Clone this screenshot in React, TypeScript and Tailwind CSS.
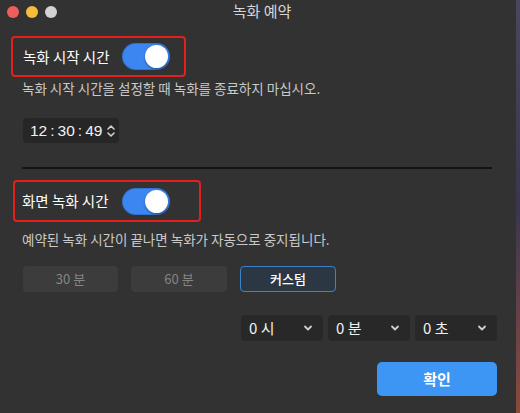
import React from 'react';

const FONT = '"Noto Sans CJK KR", "Noto Sans", sans-serif';

const Toggle: React.FC = () => (
  <div className="w-[48px] h-[27px] rounded-full bg-[#3b86f0] flex items-center justify-end pr-[2px] shadow-[inset_0_0_0_1px_rgba(0,0,0,0.15)]">
    <div className="w-[23px] h-[23px] rounded-full bg-white shadow-[0_1px_2px_rgba(0,0,0,0.4)]" />
  </div>
);

const Chevron: React.FC = () => (
  <svg width="10" height="10" viewBox="0 0 10 10" fill="none" stroke="#cfcfcf" strokeWidth="1.8" strokeLinecap="round" strokeLinejoin="round">
    <path d="M2 3.5 L5 6.5 L8 3.5" />
  </svg>
);

const Select: React.FC<{ label: string }> = ({ label }) => (
  <div className="w-[82px] h-[26px] rounded-[4px] bg-[#282828] flex items-center justify-between pl-[8px] pr-[10px]">
    <span className="text-[15px] text-[#f0f0f0]">{label}</span>
    <Chevron />
  </div>
);

const App: React.FC = () => {
  return (
    <div className="flex w-[520px] h-[413px] overflow-hidden" style={{ fontFamily: FONT }}>
      <div className="w-[516px] h-full bg-[#323232] flex flex-col">
        {/* title bar */}
        <div className="h-[23px] grid grid-cols-[1fr_auto_1fr] items-center">
          <div className="flex items-center gap-[7px] pl-[7px]">
            <div className="w-[12px] h-[12px] rounded-full bg-[#ed5f5a]" />
            <div className="w-[12px] h-[12px] rounded-full bg-[#f6bd3b]" />
            <div className="w-[12px] h-[12px] rounded-full bg-[#d2d2d2]" />
          </div>
          <div className="text-[15px] text-[#d6d6d6] ml-[8px]">녹화 예약</div>
          <div />
        </div>

        <div className="flex flex-col px-[11px]">
          <div className="mt-[13px] w-[175px] h-[41px] border-2 border-[#e5201c] rounded-[4px] flex items-center pl-[10px] gap-[12px]">
            <span className="text-[14.5px] text-white">녹화 시작 시간</span>
            <Toggle />
          </div>
          <div className="mt-[2px] ml-[11px] text-[13.5px] leading-[18px] text-[#c9c9c9] whitespace-nowrap">
            녹화 시작 시간을 설정할 때 녹화를 종료하지 마십시오.
          </div>

          <div className="mt-[21px] ml-[12px] w-[96px] h-[25px] rounded-[4px] bg-[#262626] flex items-center pl-[7px] gap-[4px]">
            <span className="flex items-center text-[15.5px] text-[#f2f2f2] whitespace-nowrap shrink-0" style={{ fontFamily: '"Liberation Sans", sans-serif' }}>
              12<span className="mx-[3px]">:</span>30<span className="mx-[3px]">:</span>49
            </span>
            <svg width="10" height="16" viewBox="0 0 10 16" fill="none" stroke="#d0d0d0" strokeWidth="1.6" strokeLinecap="round" strokeLinejoin="round" className="shrink-0">
              <path d="M2 6 L5 3 L8 6" />
              <path d="M2 10 L5 13 L8 10" />
            </svg>
          </div>

          <div className="mt-[24px] ml-[11px] w-[470px] h-[2px] bg-[#141414]" />

          <div className="mt-[11px] ml-[2px] w-[188px] h-[42px] border-2 border-[#e5201c] rounded-[4px] flex items-center pl-[7px] gap-[13px]">
            <span className="text-[14.5px] text-white">화면 녹화 시간</span>
            <Toggle />
          </div>
          <div className="mt-[8px] ml-[11px] text-[13.5px] leading-[18px] text-[#c9c9c9] whitespace-nowrap">
            예약된 녹화 시간이 끝나면 녹화가 자동으로 중지됩니다.
          </div>

          <div className="mt-[18px] ml-[12px] flex gap-[13px]">
            <div className="w-[95px] h-[26px] rounded-[4px] bg-[#3c3c3c] flex items-center justify-center text-[13px] text-[#858585]">30 분</div>
            <div className="w-[96px] h-[26px] rounded-[4px] bg-[#3c3c3c] flex items-center justify-center text-[13px] text-[#858585]">60 분</div>
            <div className="w-[96px] h-[26px] rounded-[4px] bg-[#2c3744] border border-[#3f82cc] flex items-center justify-center text-[13px] font-medium text-white">커스텀</div>
          </div>

          <div className="mt-[23px] ml-[230px] flex gap-[5px]">
            <Select label="0 시" />
            <Select label="0 분" />
            <Select label="0 초" />
          </div>

          <div className="mt-[21px] self-end mr-[8px] w-[120px] h-[34px] rounded-[5px] bg-[#3d95f4] flex items-center justify-center text-[15px] font-bold text-white">
            확인
          </div>
        </div>
      </div>
      <div className="w-[4px] h-full bg-gradient-to-b from-[#4a4660] via-[#3b3550] to-[#8a4a3a]" />
    </div>
  );
};

export default App;
